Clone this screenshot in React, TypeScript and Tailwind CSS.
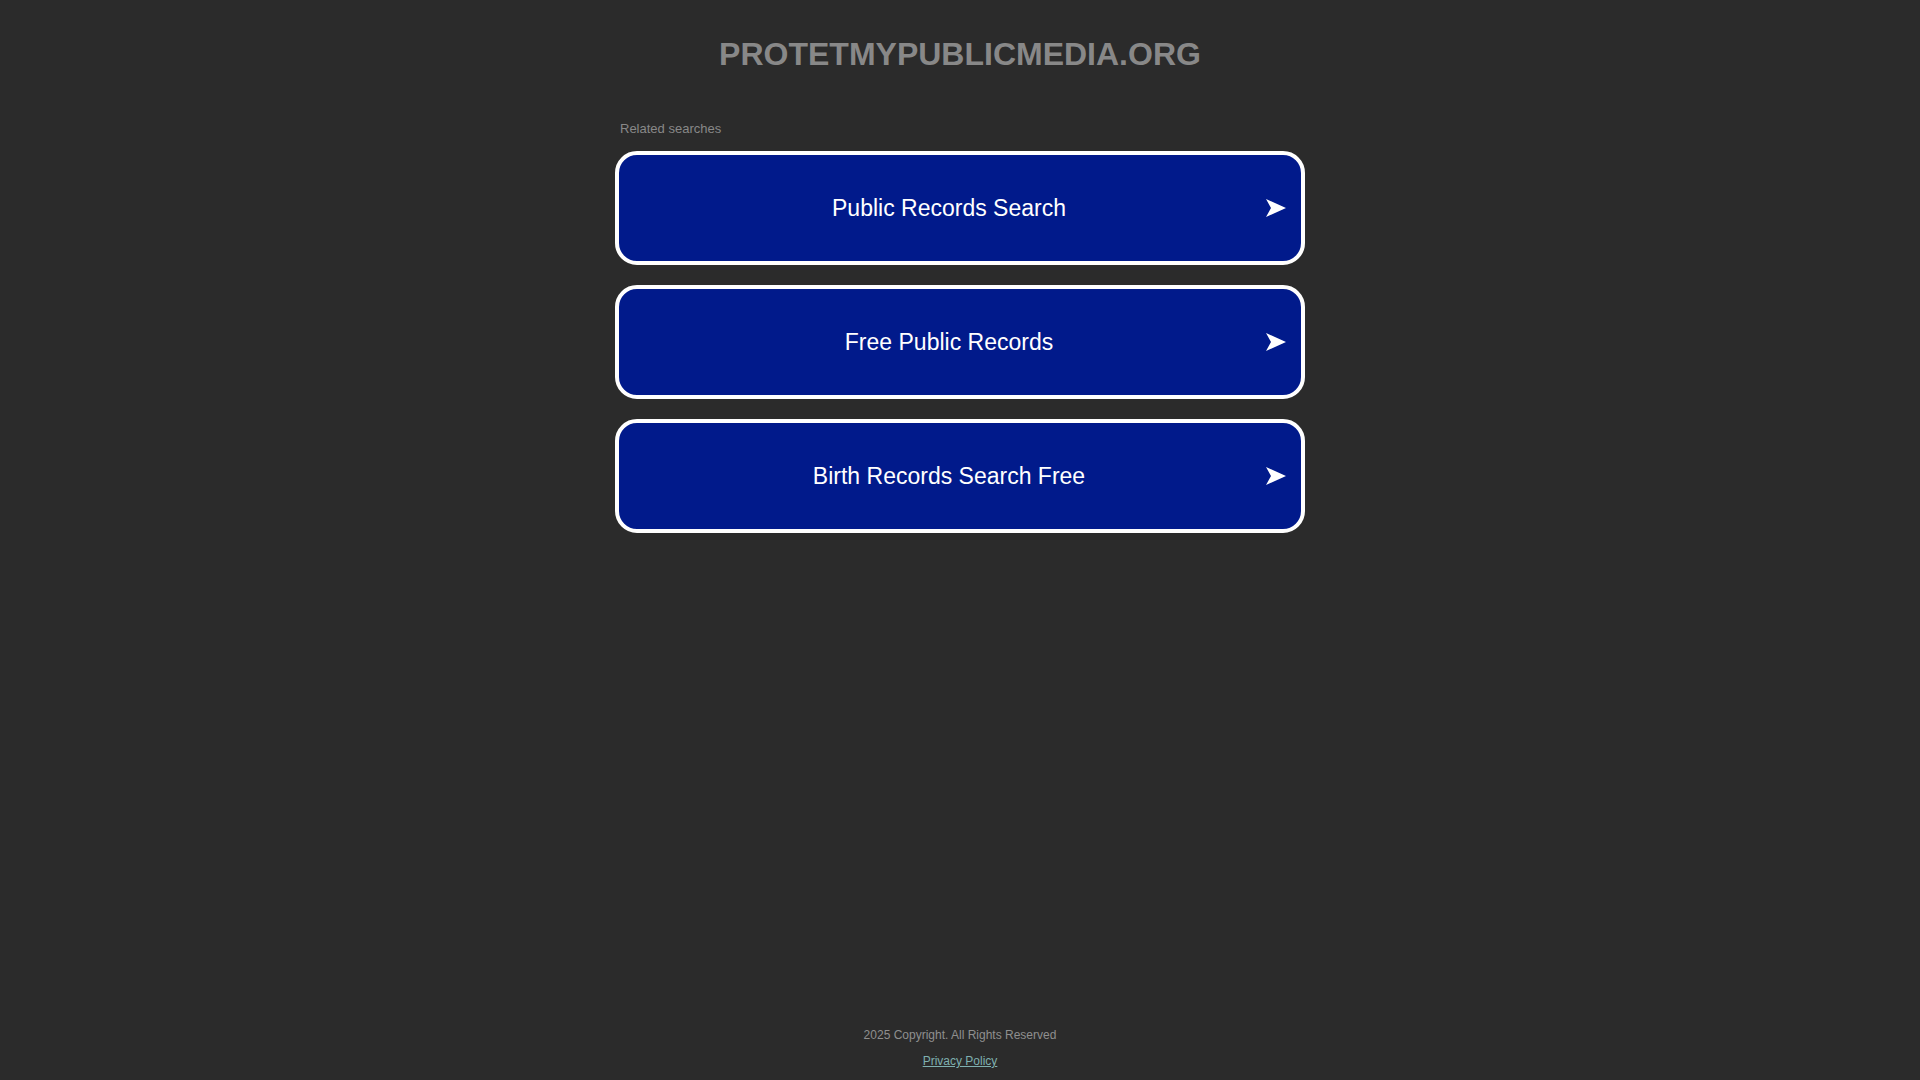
import React from "react";

const items = ["Public Records Search", "Free Public Records", "Birth Records Search Free"];

export default function App() {
  return (
    <div
      className="min-h-screen flex flex-col bg-[#2b2b2b]"
      style={{ fontFamily: '"Liberation Sans", Arial, sans-serif' }}
    >
      <div className="w-[690px] mx-auto flex flex-col">
        <h1 className="mt-[36px] text-center text-[32px] leading-[37px] font-bold text-[#888888]">
          PROTETMYPUBLICMEDIA.ORG
        </h1>
        <div className="mt-[48px] pl-[5px] text-[13px] leading-[15px] text-[#888888]">Related searches</div>
        <div className="mt-[15px] flex flex-col gap-[20px]">
          {items.map((t) => (
            <a
              key={t}
              href="#"
              className="h-[114px] flex items-center rounded-[22px] border-[4px] border-white bg-[#011a8b] pl-[13px] pr-[15px] text-white no-underline"
            >
              <span className="flex-1 text-center text-[23px] leading-[26px]">{t}</span>
              <span className="w-[20px] flex items-center justify-center">
                <svg width="20" height="18" viewBox="0 0 20 18">
                  <path d="M0 0 L20 9 L0 18 L5 9 Z" fill="white" />
                </svg>
              </span>
            </a>
          ))}
        </div>
      </div>
      <footer className="mt-auto pb-[12px] flex flex-col items-center gap-[12px]">
        <div className="text-[12px] leading-[14px] text-[#8f8f8f]">2025 Copyright. All Rights Reserved</div>
        <a href="#" className="text-[12px] leading-[14px] text-[#7fb0b0] underline">
          Privacy Policy
        </a>
      </footer>
    </div>
  );
}
